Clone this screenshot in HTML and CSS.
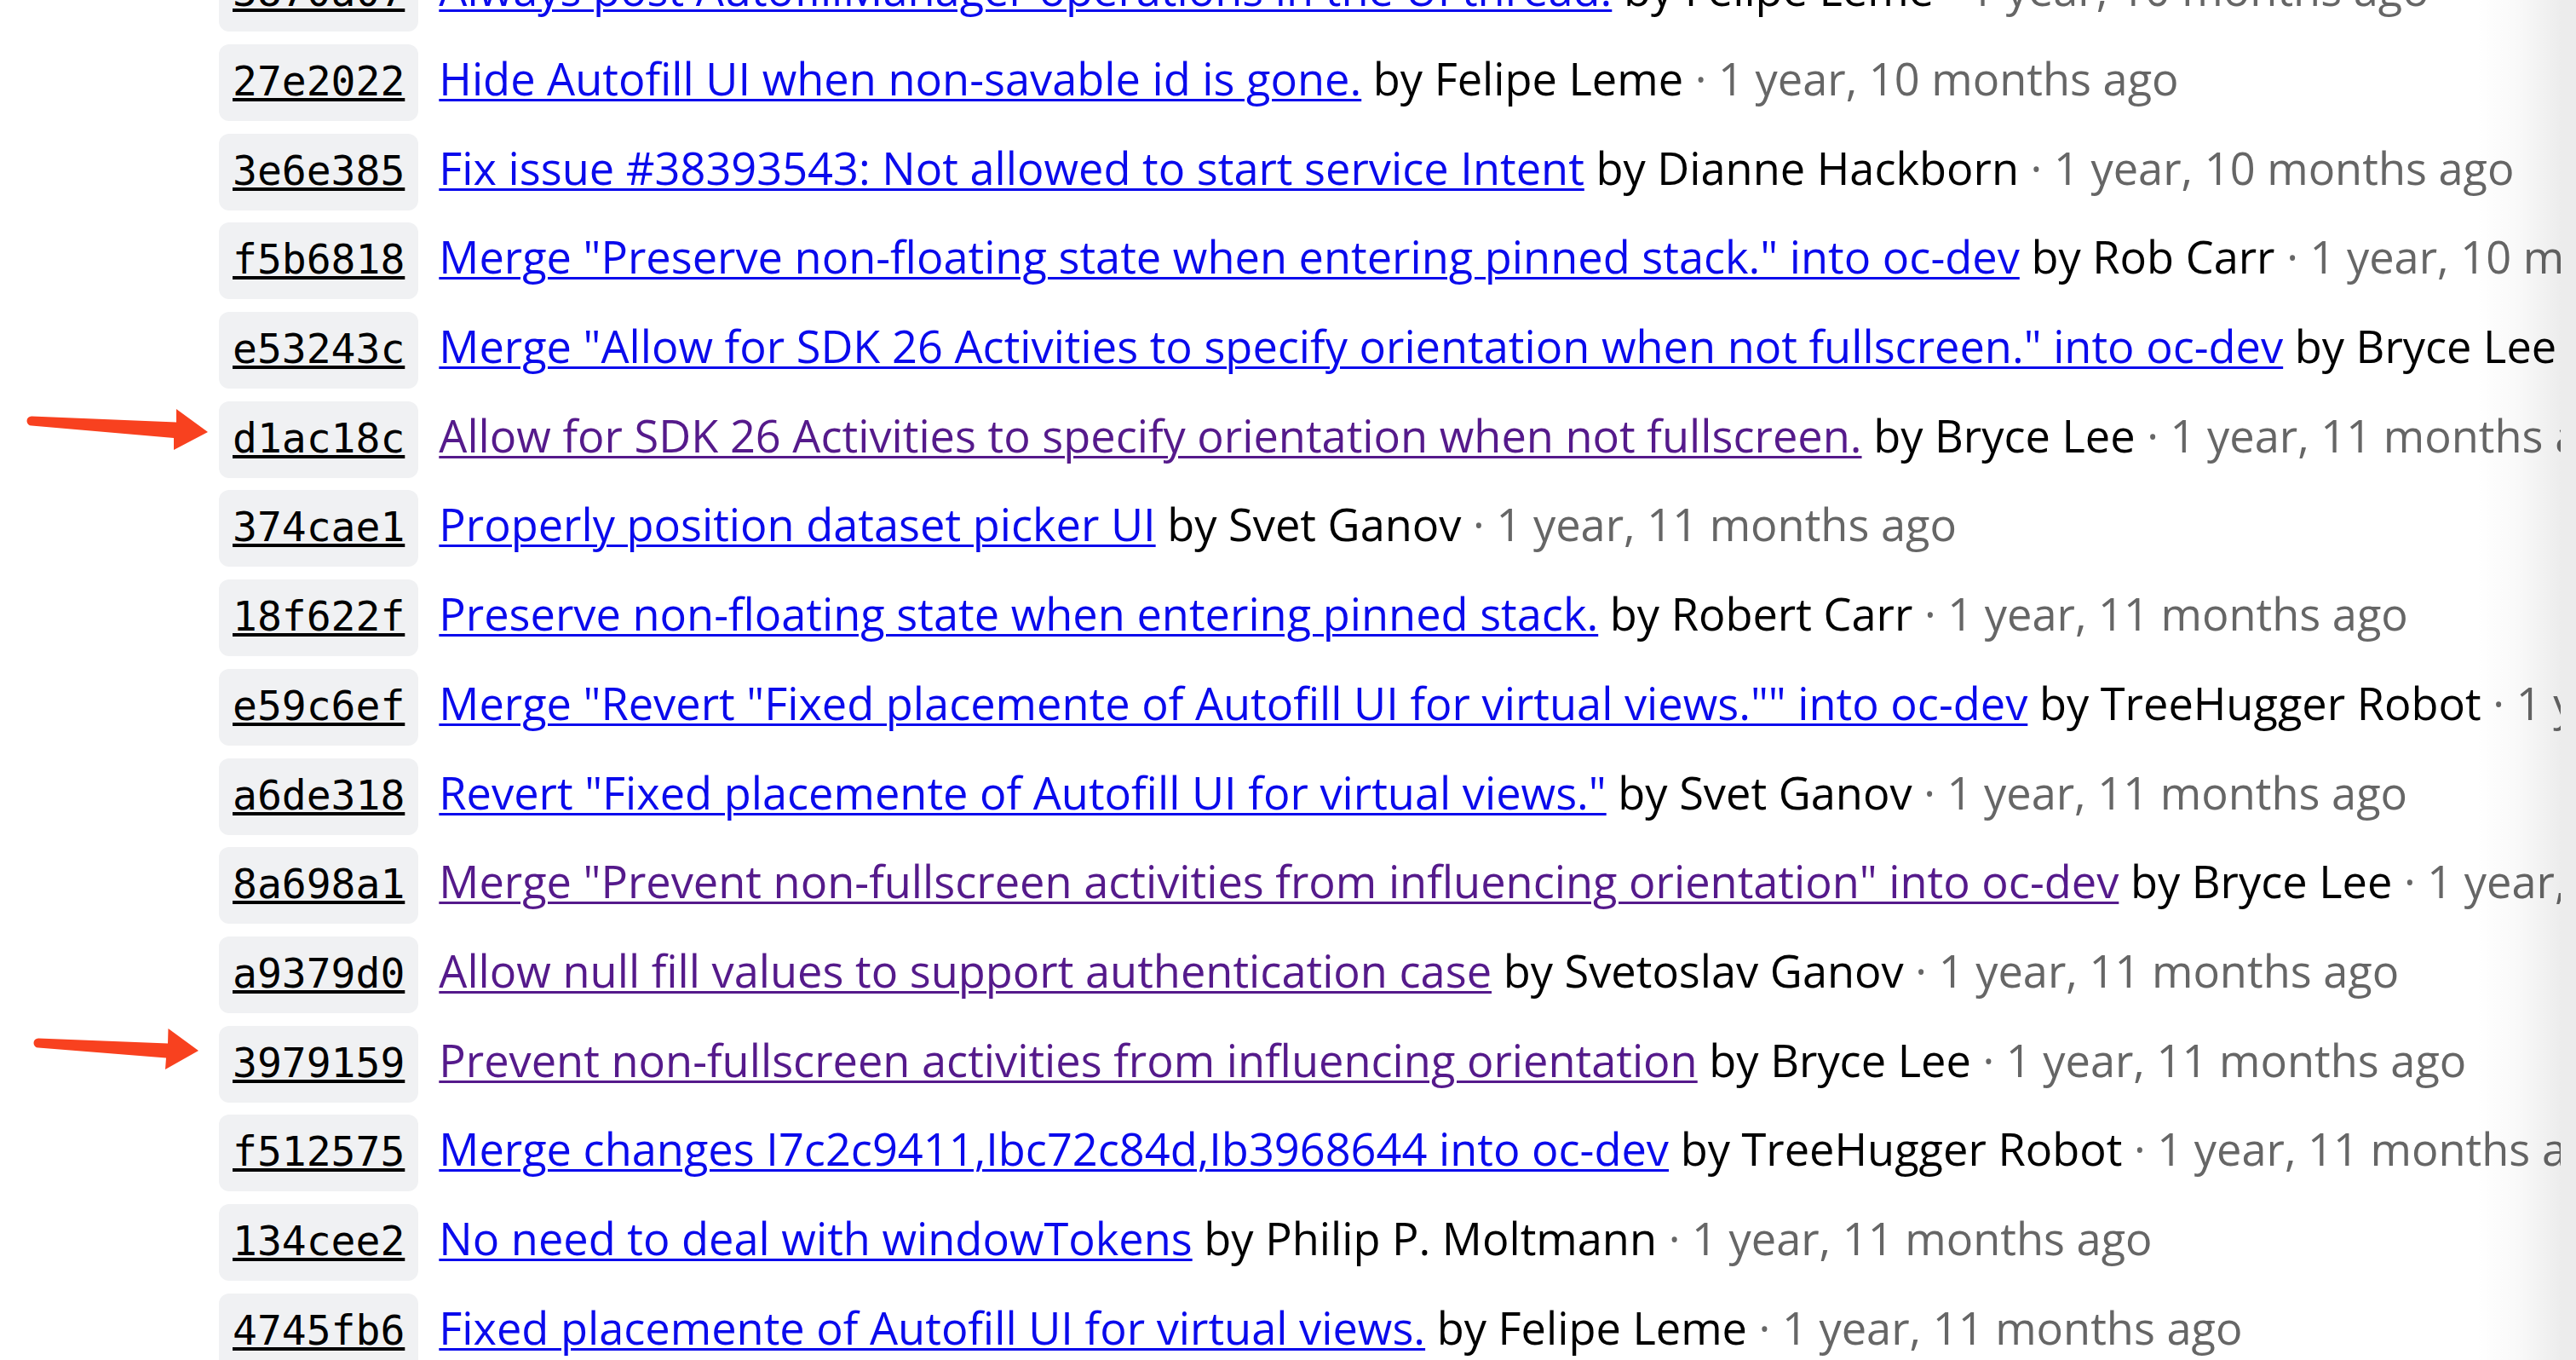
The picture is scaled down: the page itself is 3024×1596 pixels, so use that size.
FILE: index.html
```html
<!DOCTYPE html>
<html lang="en">
<head>
<meta charset="utf-8">
<title>Commit log</title>
<link rel="stylesheet" href="styles.css">
</head>
<body>
<div class="viewport">
  <main class="log">
    <ol class="commits">
      <li class="commit"><a class="sha" href="#">3870a07</a><span class="info"><a class="msg" href="#">Always post AutofillManager operations in the UI thread.</a> <span class="author">by Felipe Leme</span> <span class="time">· 1 year, 10 months ago</span></span></li>
      <li class="commit"><a class="sha" href="#">27e2022</a><span class="info"><a class="msg" href="#">Hide Autofill UI when non-savable id is gone.</a> <span class="author">by Felipe Leme</span> <span class="time">· 1 year, 10 months ago</span></span></li>
      <li class="commit"><a class="sha" href="#">3e6e385</a><span class="info"><a class="msg" href="#">Fix issue #38393543: Not allowed to start service Intent</a> <span class="author">by Dianne Hackborn</span> <span class="time">· 1 year, 10 months ago</span></span></li>
      <li class="commit"><a class="sha" href="#">f5b6818</a><span class="info"><a class="msg" href="#">Merge "Preserve non-floating state when entering pinned stack." into oc-dev</a> <span class="author">by Rob Carr</span> <span class="time">· 1 year, 10 months ago</span></span></li>
      <li class="commit"><a class="sha" href="#">e53243c</a><span class="info"><a class="msg" href="#">Merge "Allow for SDK 26 Activities to specify orientation when not fullscreen." into oc-dev</a> <span class="author">by Bryce Lee</span> <span class="time">· 1 year, 11 months ago</span></span></li>
      <li class="commit"><a class="sha" href="#">d1ac18c</a><span class="info"><a class="msg visited" href="#">Allow for SDK 26 Activities to specify orientation when not fullscreen.</a> <span class="author">by Bryce Lee</span> <span class="time">· 1 year, 11 months ago</span></span></li>
      <li class="commit"><a class="sha" href="#">374cae1</a><span class="info"><a class="msg" href="#">Properly position dataset picker UI</a> <span class="author">by Svet Ganov</span> <span class="time">· 1 year, 11 months ago</span></span></li>
      <li class="commit"><a class="sha" href="#">18f622f</a><span class="info"><a class="msg" href="#">Preserve non-floating state when entering pinned stack.</a> <span class="author">by Robert Carr</span> <span class="time">· 1 year, 11 months ago</span></span></li>
      <li class="commit"><a class="sha" href="#">e59c6ef</a><span class="info"><a class="msg" href="#">Merge "Revert "Fixed placemente of Autofill UI for virtual views."" into oc-dev</a> <span class="author">by TreeHugger Robot</span> <span class="time">· 1 year, 11 months ago</span></span></li>
      <li class="commit"><a class="sha" href="#">a6de318</a><span class="info"><a class="msg" href="#">Revert "Fixed placemente of Autofill UI for virtual views."</a> <span class="author">by Svet Ganov</span> <span class="time">· 1 year, 11 months ago</span></span></li>
      <li class="commit"><a class="sha" href="#">8a698a1</a><span class="info"><a class="msg visited" href="#">Merge "Prevent non-fullscreen activities from influencing orientation" into oc-dev</a> <span class="author">by Bryce Lee</span> <span class="time">· 1 year, 11 months ago</span></span></li>
      <li class="commit"><a class="sha" href="#">a9379d0</a><span class="info"><a class="msg visited" href="#">Allow null fill values to support authentication case</a> <span class="author">by Svetoslav Ganov</span> <span class="time">· 1 year, 11 months ago</span></span></li>
      <li class="commit"><a class="sha" href="#">3979159</a><span class="info"><a class="msg visited" href="#">Prevent non-fullscreen activities from influencing orientation</a> <span class="author">by Bryce Lee</span> <span class="time">· 1 year, 11 months ago</span></span></li>
      <li class="commit"><a class="sha" href="#">f512575</a><span class="info"><a class="msg" href="#">Merge changes I7c2c9411,Ibc72c84d,Ib3968644 into oc-dev</a> <span class="author">by TreeHugger Robot</span> <span class="time">· 1 year, 11 months ago</span></span></li>
      <li class="commit"><a class="sha" href="#">134cee2</a><span class="info"><a class="msg" href="#">No need to deal with windowTokens</a> <span class="author">by Philip P. Moltmann</span> <span class="time">· 1 year, 11 months ago</span></span></li>
      <li class="commit"><a class="sha" href="#">4745fb6</a><span class="info"><a class="msg" href="#">Fixed placemente of Autofill UI for virtual views.</a> <span class="author">by Felipe Leme</span> <span class="time">· 1 year, 11 months ago</span></span></li>
    </ol>
  </main>
  <div class="shade"></div>
  <svg class="arrows" width="260" height="1596" viewBox="0 0 260 1596" aria-hidden="true">
    <path class="arrow" d="M37 488.5 L207 495.5 L207 480 L244 507 L204 528 L204 514 L37 499.5 A5.5 5.5 0 0 1 37 488.5 Z"/>
    <path class="arrow" d="M45 1218.5 L197 1224.5 L197.5 1207 L233 1233 L194 1255 L195 1241.5 L45 1229.5 A5.5 5.5 0 0 1 45 1218.5 Z"/>
  </svg>
</div>
<div class="gutter"></div>
</body>
</html>
```

FILE: styles.css
```css
html, body {
  margin: 0;
  padding: 0;
  background: #ffffff;
}

body {
  display: flex;
  height: 1596px;
  overflow: hidden;
}

.viewport {
  flex: 1;
  position: relative;
  overflow: hidden;
}

.gutter {
  width: 18px;
  flex: none;
  background: #ececec;
}

.log {
  padding-left: 257px;
}

.commits {
  list-style: none;
  margin: -52.7px 0 0 0;
  padding: 0;
}

.commit {
  display: flex;
  align-items: baseline;
  height: 90px;
  margin-bottom: 14.7px;
  white-space: nowrap;
}

.sha {
  flex: none;
  font-family: "DejaVu Sans Mono", monospace;
  font-size: 48px;
  line-height: 86px;
  padding: 0 16px 4px;
  background: #f0f1f3;
  border-radius: 12px;
  color: #000000;
  text-decoration: underline;
  text-decoration-thickness: 4px;
  text-underline-offset: 3px;
}

.info {
  margin-left: 24px;
  font-family: "Open Sans", sans-serif;
  font-size: 52.35px;
  color: #000000;
}

.msg {
  color: #0a0aec;
  text-decoration: underline;
  text-decoration-thickness: 3px;
  text-underline-offset: 4px;
}

.msg.visited {
  color: #551a8b;
}

.author {
  color: #000000;
}

.time {
  color: #666666;
}

.shade {
  position: absolute;
  top: 0;
  right: 0;
  bottom: 0;
  width: 100px;
  background: linear-gradient(to right, rgba(0, 0, 0, 0) 0%, rgba(0, 0, 0, 0.025) 50%, rgba(0, 0, 0, 0.075) 100%);
  pointer-events: none;
}

.arrows {
  position: absolute;
  top: 0;
  left: 0;
  pointer-events: none;
}

.arrow {
  fill: #f8411f;
}
```
